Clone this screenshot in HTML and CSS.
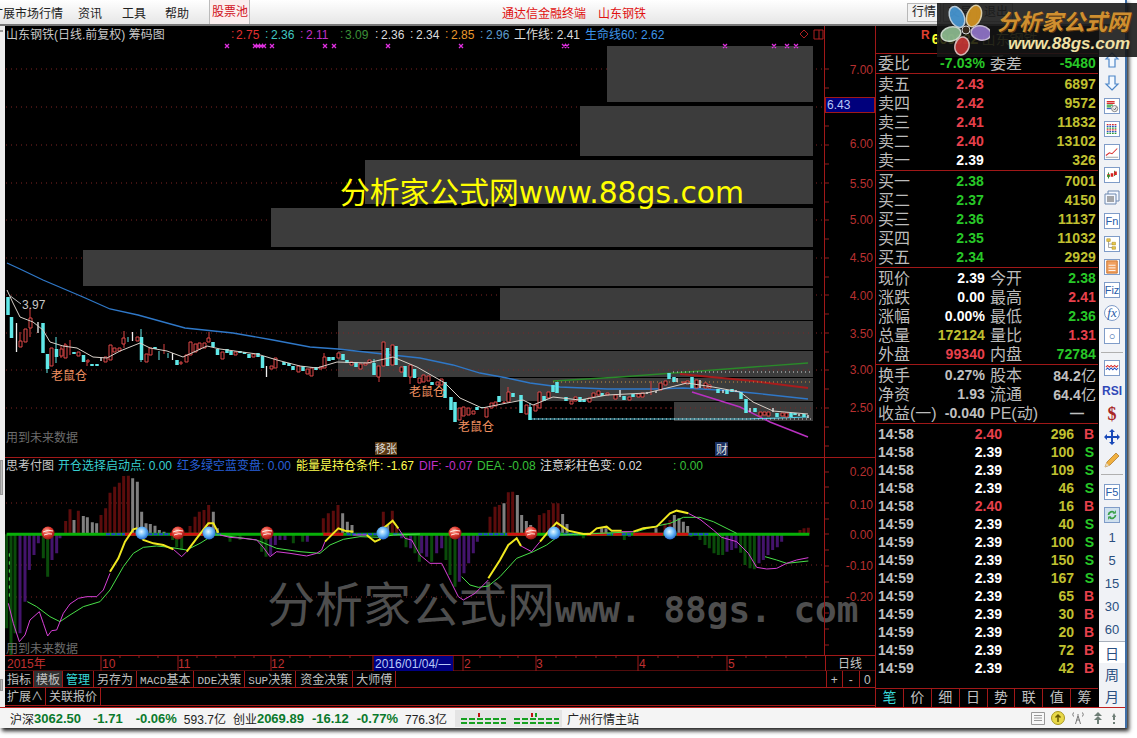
FILE: index.html
```html
<!DOCTYPE html>
<html lang="zh">
<head>
<meta charset="utf-8">
<title>山东钢铁 筹码图</title>
<link rel="stylesheet" href="styles.css">
</head>
<body>
<div class="window">
  <header class="menubar">
    <span class="menu-first">扩展市场行情</span>
    <span class="menu-item m1">资讯</span>
    <span class="menu-item m2">工具</span>
    <span class="menu-item m3">帮助</span>
    <span class="menu-pool">股票池</span>
    <span class="menu-red r1">通达信金融终端</span>
    <span class="menu-red r2">山东钢铁</span>
    <span class="menu-btn">行情</span>
    <span class="menu-btn faded">交易</span>
    <span class="menu-btn faded">退出</span>
  </header>

  <div class="main">
    <div class="edge">
      <span class="edge-mark top"></span>
      <span class="edge-mark mid"></span>
      <span class="edge-mark low"></span>
    </div>

    <section class="charts">
      <svg class="chart" width="870" height="645" viewBox="5 26 870 645" xmlns="http://www.w3.org/2000/svg">
        <defs>
          <radialGradient id="ballRed" cx="40%" cy="35%" r="70%">
            <stop offset="0" stop-color="#ffb0a0"/><stop offset=".5" stop-color="#e03a30"/><stop offset="1" stop-color="#8a1010"/>
          </radialGradient>
          <radialGradient id="ballBlue" cx="45%" cy="40%" r="65%">
            <stop offset="0" stop-color="#e8f8ff"/><stop offset=".5" stop-color="#68b8f8"/><stop offset="1" stop-color="#1c5cc8"/>
          </radialGradient>
        </defs>

        <!-- price grid -->
        <path class="grid" d="M6 69H824M6 107H824M6 145H824M6 183H824M6 220H824M6 258H824M6 295H824M6 333H824M6 370H824M6 408H824"/>

        <!-- chip distribution blocks -->
        <rect class="chip" x="607" y="46" width="206" height="56"/>
        <rect class="chip" x="580" y="106" width="233" height="50"/>
        <rect class="chip" x="365" y="160" width="448" height="44"/>
        <rect class="chip" x="271" y="208" width="542" height="39"/>
        <rect class="chip" x="83" y="250" width="730" height="36"/>
        <rect class="chip" x="500" y="288" width="313" height="32"/>
        <rect class="chip" x="338" y="321" width="475" height="29"/>
        <rect class="chip" x="338" y="351" width="475" height="26"/>
        <rect class="chip" x="500" y="378" width="313" height="23"/>
        <rect class="chip" x="674" y="402" width="139" height="19"/>
        <path class="grid" d="M338 333H813M338 370H813M500 408H813"/>

        <!-- captions -->
        <text class="t12 c-grey" x="6" y="39">山东钢铁(日线.前复权) 筹码图</text>
        <text class="t12 c-red2" x="231" y="38">:</text><text class="t12 c-red2" x="236" y="39">2.75</text>
        <text class="t12 c-tea" x="265" y="38">:</text><text class="t12 c-tea" x="271" y="39">2.36</text>
        <text class="t12 c-mag" x="300" y="38">:</text><text class="t12 c-mag" x="306" y="39">2.11</text>
        <text class="t12 c-grn" x="340" y="38">:</text><text class="t12 c-grn" x="345" y="39">3.09</text>
        <text class="t12 c-wht" x="375" y="38">:</text><text class="t12 c-wht" x="381" y="39">2.36</text>
        <text class="t12 c-wht" x="410" y="38">:</text><text class="t12 c-wht" x="416" y="39">2.34</text>
        <text class="t12 c-org" x="445" y="38">:</text><text class="t12 c-org" x="451" y="39">2.85</text>
        <text class="t12 c-sky" x="480" y="38">:</text><text class="t12 c-sky" x="486" y="39">2.96</text>
        <text class="t12 c-wht" x="514" y="39">工作线: 2.41</text>
        <text class="t12 c-blue" x="585" y="39">生命线60: 2.62</text>
        <path class="mini" d="M800 34l4-4 4 4-4 4zM814 30h9v9h-9zM819 30v9"/>

        <!-- markers -->
        <path class="xmark" d="M225 44l4 4m0-4l-4 4M253 44l4 4m0-4l-4 4M256 44l4 4m0-4l-4 4M259 44l4 4m0-4l-4 4M262 44l4 4m0-4l-4 4M270 44l4 4m0-4l-4 4M323 44l4 4m0-4l-4 4M332 44l4 4m0-4l-4 4M386 44l4 4m0-4l-4 4M459 44l4 4m0-4l-4 4M562 44l4 4m0-4l-4 4M565 44l4 4m0-4l-4 4M723 44l4 4m0-4l-4 4M772 44l4 4m0-4l-4 4M785 44l4 4m0-4l-4 4M794 44l4 4m0-4l-4 4"/>

        <text class="mark-big" x="340" y="203">分析家公式网www.88gs.com</text>

        <!-- moving averages -->
        <polyline class="ln-blue" points="7,263 20,269 43,280 83,297 110,309 138,315 185,328 233,333 273,340 310,347 338,349 383,354 420,358 453,365 480,373 507,378 530,383 560,387 607,389 653,389 683,388 720,390 753,393 808,399"/>
        <polyline class="ln-green" points="553,381 620,377 687,372 753,367 808,363"/>
        <polyline class="ln-red" points="680,374 753,381 808,388"/>
        <polyline class="ln-mag" points="692,392 740,407 770,422 808,437"/>
        <polyline class="ln-cyan" points="530,403 530,419 600,419 748,419 808,417"/>
        <path class="dots-w" d="M673 372H813M530 419H813"/>
        <path class="dots-o" d="M553 382H813"/>

        <!-- candles -->
        <path class="wick-red" d="M20 332V347M30 308V337M61 346V358M65 343V358M70 340V355M87 360V366M124 331V348M164 344V354M209 332V342M324 353V368M379 366V382M410 365V384M508 387V402M651 381V395"/>
        <path class="wick-cyan" d="M56 337V363M141 329V362M374 359V375M47 354V373M159 351V360M168 353V358M128 337V342"/>
        <path class="body-cyan" d="M8 297V315M11.500 317V338M43 323V353M47.500 354V369M56.500 349V357M74 352V354M83.500 355V362M92 364V366M97 364V366M141.500 337V360M155 347V349M177 360V365M213 342V347M217.500 349V355M227 349V353M231 351V355M240 351V353M244.500 352V354M249 354V358M258 353V357M262.500 356V368M284 362V365M289 363V366M293 366V370M303 366V371M316 367V370M329 357V361M333 357V360M343 354V360M347 360V363M356 362V367M374 363V375M387.500 348V366M396 346V365M405 366V377M414.500 369V378M432 382V385M445 382V398M451 397V410M455 402V422M477 407V410M482 407V408M499 396V402M513 393V397M521 395V413M530 407V420M544 396V401M553 385V392M557 382V393M566 397V401M580 397V402M584 399V402M602 393V396M624 396V400M633 394V397M669 373V379M674 377V382M692 377V388M718 389V393M727 390V394M732 389V392M741 392V399M746 399V413M755 408V412M777 413V417M791 413V417M795 413V415M804 414V417"/>
        <path class="wick-white" d="M16.500 323V352M38 322V333M101 357V361M132.500 332V341M172.500 353V360M266.500 366V377M620 390V397M647 392V394M656 391V393M677 378V382M700 380V388M723 390V393M736 390V392M750 408V412M773 408V412M799 414V416M808 415V418"/>
        <path class="body-red" d="M19 341h3v6h-3zM24 329h3v13h-3zM29 318h3v10h-3zM50 348h3v18h-3zM60 349h3v7h-3zM64 345h3v13h-3zM77 352h3v4h-3zM87 360h2v2h-2zM104 357h3v5h-3zM109 345h3v15h-3zM113 348h3v4h-3zM118 348h3v3h-3zM122 338h3v6h-3zM136 337h3v4h-3zM145 354h3v8h-3zM149 348h3v7h-3zM180 362h2v2h-2zM185 355h3v7h-3zM189 342h3v13h-3zM194 344h3v8h-3zM198 343h3v6h-3zM203 343h3v5h-3zM207 338h3v4h-3zM221 352h3v7h-3zM234 352h3v3h-3zM252 354h3v3h-3zM270 366h3v3h-3zM274 358h3v10h-3zM297 366h3v6h-3zM306 369h3v5h-3zM310 368h3v8h-3zM319 367h3v2h-3zM323 357h3v11h-3zM337 353h3v5h-3zM350 362h3v3h-3zM359 364h3v5h-3zM364 363h3v2h-3zM368 360h3v3h-3zM377 366h3v11h-3zM382 342h3v24h-3zM391 345h3v20h-3zM400 367h3v5h-3zM409 365h3v12h-3zM418 378h3v5h-3zM422 375h3v7h-3zM427 376h3v5h-3zM436 382h3v3h-3zM440 379h3v6h-3zM458 408h3v12h-3zM462 407h3v9h-3zM467 408h3v7h-3zM472 411h3v3h-3zM485 408h3v9h-3zM490 403h3v5h-3zM494 402h3v4h-3zM503 402h2v1h-2zM507 392h3v10h-3zM525 405h3v9h-3zM534 405h3v6h-3zM538 392h3v16h-3zM547 392h3v6h-3zM570 401h3v3h-3zM574 397h3v4h-3zM588 398h3v4h-3zM592 393h3v4h-3zM597 391h3v4h-3zM606 393h3v2h-3zM614 395h3v4h-3zM628 397h3v3h-3zM637 394h3v3h-3zM641 393h3v4h-3zM659 383h3v7h-3zM664 381h3v4h-3zM682 382h3v1h-3zM686 381h3v3h-3zM695 380h3v8h-3zM704 383h3v5h-3zM708 385h3v3h-3zM759 412h3v4h-3zM763 412h3v3h-3zM767 412h3v4h-3zM781 413h3v3h-3zM785 413h3v4h-3z"/>
        <polyline class="ln-white" points="7,290 13,303 20,317 33,322 43,330 50,342 63,346 77,348 93,357 107,358 120,351 140,343 150,348 167,351 183,357 207,346 220,349 257,354 277,360 300,366 317,368 337,362 367,363 393,357 417,367 445,383 460,398 482,408 507,403 523,400 533,405 553,397 580,400 607,395 647,393 667,388 687,383 713,387 740,392 753,402 773,411 808,414"/>

        <path class="ln-thin" d="M9 295L21 304"/>
        <text class="t12 c-grey" x="22" y="309">3.97</text>
        <text class="t12 c-rat" x="51" y="380">老鼠仓</text>
        <text class="t12 c-rat" x="409" y="396">老鼠仓</text>
        <text class="t12 c-rat" x="458" y="431">老鼠仓</text>
        <text class="t12 c-dim" x="6" y="442">用到未来数据</text>
        <rect class="tag-brown" x="375" y="442" width="22" height="13"/>
        <text class="t11 c-wht" x="375" y="453">移张</text>
        <rect class="tag-blue" x="715" y="442" width="13" height="14"/>
        <text class="t12 c-wht" x="716" y="454">财</text>

        <!-- sub chart -->
        <path class="rule" d="M5 457.500H875"/>
        <path class="grid" d="M6 503H824M6 565H824M6 597H824"/>
        <text class="t12 c-grey" x="6" y="470">思考付图</text>
        <text class="t12 c-tea2" x="58" y="470">开仓选择启动点: 0.00</text>
        <text class="t12 c-blu2" x="177" y="470">红多绿空蓝变盘: 0.00</text>
        <text class="t12 c-yel" x="296" y="470">能量是持仓条件: -1.67</text>
        <text class="t12 c-mag" x="419" y="470">DIF: -0.07</text>
        <text class="t12 c-grn2" x="477" y="470">DEA: -0.08</text>
        <text class="t12 c-wht" x="540" y="470">注意彩柱色变: 0.02</text>
        <text class="t12 c-grn2" x="673" y="470">: 0.00</text>

        <text class="mark-dim" x="267" y="622">分析家公式网<tspan class="mark-dim-mono">www. 88gs. com</tspan></text>

        <g transform="translate(0,460) scale(.33333)">
          <path class="h-red" d="M197 223V183M210 223V148M235 223V152M303 223V165M317 223V145M330 223V98M344 223V80M358 223V68M371 223V48M385 223V47M570 223V198M585 223V170M598 223V155M612 223V150M626 223V135M970 223V175M985 223V160M1000 223V152M1014 223V135M1150 223V155M1177 223V152M1190 223V200"/>
          <path class="h-grey" d="M222 223V180M250 223V168M262 223V172M277 223V187M290 223V190M398 223V55M412 223V65M425 223V155M438 223V190M451 223V192M465 223V197M478 223V210M492 223V215M640 223V155M652 223V205M1028 223V160M1042 223V185M1056 223V195M1163 223V195"/>
          <path class="h-green" d="M20 223V505M33 223V585M45 223V520M130 223V295M143 223V350M518 223V240M530 223V262M545 223V270M690 223V245M720 223V240M785 223V275M798 223V290M880 223V250M908 223V245M1218 223V262M1245 223V280M1258 223V305"/>
          <path class="h-purple" d="M60 223V520M75 223V425M88 223V330M102 223V285M115 223V250M156 223V300M170 223V280M180 223V235M812 223V285M826 223V255M840 223V240M855 223V240M922 223V245M1205 223V235M1232 223V265"/>
          <path class="zero-green" d="M20 223H1260"/>
          <path class="zero-blue" d="M318 223H375M445 223H510M650 223H665M1040 223H1130M1180 223H1205"/>
          <path class="zero-red" d="M375 223H410M510 223H640M970 223H1030"/>
          <polyline class="ln-dea" points="82,425 110,440 150,470 180,485 210,465 250,440 300,425 330,390 370,320 400,280 430,262 470,258 510,262 560,270 600,250 640,225 660,225 770,240 830,265 900,275 960,280 990,255 1030,238 1080,230 1140,232 1180,225 1260,222"/>
          <polyline class="ln-dif" points="25,430 40,490 58,545 75,525 90,480 118,455 130,490 143,528 155,512 170,510 190,460 210,432 235,415 260,410 290,410 310,390 330,340"/>
          <polyline class="ln-dif" points="520,268 545,290 560,275"/>
          <polyline class="ln-dif" points="660,225 690,232 730,235 770,240 790,262 810,290 830,275 870,280 920,288 950,280 965,270 975,245"/>
          <polyline class="ln-dif" points="1060,225 1100,225"/>
          <polyline class="ln-dif" points="1195,205 1215,235 1235,240 1260,285"/>
          <polyline class="ln-yel" points="330,335 355,295 375,245 400,208 410,205 430,240 460,250 490,255 520,268"/>
          <polyline class="ln-yel" points="560,275 590,235 625,190 640,190 655,218"/>
          <polyline class="ln-yel" points="975,245 1015,205 1035,212 1060,215"/>
          <polyline class="ln-yel" points="1100,225 1125,245 1140,238 1150,205 1178,182 1195,205"/>
          <path class="dots-lg" d="M28 280V410"/>
        </g>
        <g transform="translate(420,460) scale(.33333)">
          <path class="h-red" d="M210 223V170M225 223V140M238 223V135M265 223V97M278 223V95M358 223V165M372 223V160M386 223V150M400 223V130M414 223V130M735 223V190M750 223V180M1140 223V210M1152 223V205M1165 223V203"/>
          <path class="h-grey" d="M252 223V130M292 223V105M305 223V165M319 223V183M332 223V195M428 223V162M441 223V192M545 223V205M558 223V205M708 223V205M763 223V165M777 223V175M790 223V185M803 223V198"/>
          <path class="h-green" d="M35 223V305M78 223V300M90 223V345M105 223V380M490 223V235M613 223V240M813 223V230M840 223V240M855 223V255M868 223V265M882 223V280M895 223V285M908 223V285M962 223V278M975 223V315M990 223V325M1003 223V328"/>
          <path class="h-purple" d="M5 223V280M20 223V290M50 223V280M65 223V265M118 223V365M132 223V340M146 223V310M160 223V280M172 223V245M628 223V230M921 223V275M935 223V270M948 223V265M1017 223V310M1030 223V300M1044 223V285M1058 223V270M1072 223V262M1085 223V245"/>
          <path class="zero-green" d="M0 223H1168"/>
          <path class="zero-blue" d="M175 223H262M430 223H480M560 223H580M605 223H635M805 223H865"/>
          <path class="zero-red" d="M262 223H345M500 223H560M580 223H605M640 223H730M770 223H805"/>
          <polyline class="ln-dea" points="125,350 150,375 175,382 205,378 240,350 290,295 340,275 380,255 420,225 500,222 650,215 700,200 750,190 790,172 840,172 880,185 950,220"/>
          <polyline class="ln-dea" points="1035,290 1070,300 1100,310 1165,303"/>
          <polyline class="ln-dif" points="0,285 30,310 65,310 95,370 115,410 130,420 165,400 205,360"/>
          <polyline class="ln-dif" points="303,258 335,275 360,245"/>
          <polyline class="ln-dif" points="605,215 640,215"/>
          <polyline class="ln-dif" points="805,160 840,178 880,210 905,232 950,245 985,280 1010,322 1040,327 1070,325 1100,310 1130,300 1165,293"/>
          <polyline class="ln-yel" points="205,355 240,300 265,255 290,235 303,258"/>
          <polyline class="ln-yel" points="360,245 385,215 410,188 445,212 490,222 510,222 530,205 560,200 575,212 605,212"/>
          <polyline class="ln-yel" points="640,215 670,205 710,200 750,160 770,152 805,160"/>
        </g>

        <circle class="ball-r" cx="48" cy="533" r="6.500"/><path class="ball-streak" d="M43 532q5-3 10-1M44 535q5-2 8-1"/>
        <circle class="ball-r" cx="178" cy="533" r="6.500"/><path class="ball-streak" d="M173 532q5-3 10-1M174 535q5-2 8-1"/>
        <circle class="ball-r" cx="267" cy="533" r="6.500"/><path class="ball-streak" d="M262 532q5-3 10-1M263 535q5-2 8-1"/>
        <circle class="ball-r" cx="455" cy="533" r="6.500"/><path class="ball-streak" d="M450 532q5-3 10-1M451 535q5-2 8-1"/>
        <circle class="ball-r" cx="531" cy="533" r="6.500"/><path class="ball-streak" d="M526 532q5-3 10-1M527 535q5-2 8-1"/>
        <circle class="ball-b" cx="142" cy="533" r="6.500"/>
        <circle class="ball-b" cx="209" cy="533" r="6.500"/>
        <circle class="ball-b" cx="383" cy="533" r="6.500"/>
        <circle class="ball-b" cx="554" cy="533" r="6.500"/>
        <circle class="ball-b" cx="670" cy="533" r="6.500"/>

        <text class="t12 c-dim" x="6" y="653">用到未来数据</text>

        <!-- axes -->
        <path class="rule" d="M824.500 26V655M5 655.500H875M5 671H875M825.500 655V671"/>
        <path class="tick" d="M824 69h5M824 88h5M824 107h5M824 126h5M824 145h5M824 164h5M824 183h5M824 202h5M824 220h5M824 239h5M824 258h5M824 277h5M824 295h5M824 314h5M824 333h5M824 352h5M824 370h5M824 389h5M824 408h5M824 427h5M824 446h5M824 472h5M824 487h5M824 503h5M824 519h5M824 534h5M824 550h5M824 566h5M824 582h5M824 597h5M824 613h5M824 629h5M824 645h5"/>
        <text class="axis" x="873" y="74">7.00</text>
        <text class="axis" x="873" y="148">6.00</text>
        <text class="axis" x="873" y="188">5.50</text>
        <text class="axis" x="873" y="224">5.00</text>
        <text class="axis" x="873" y="262">4.50</text>
        <text class="axis" x="873" y="300">4.00</text>
        <text class="axis" x="873" y="338">3.50</text>
        <text class="axis" x="873" y="374">3.00</text>
        <text class="axis" x="873" y="412">2.50</text>
        <rect class="price-tag" x="825.500" y="97.500" width="49" height="15"/>
        <text class="t12 c-tag" x="827" y="109">6.43</text>
        <text class="axis" x="873" y="476">0.20</text>
        <text class="axis" x="873" y="509">0.10</text>
        <text class="axis" x="873" y="539">0.00</text>
        <text class="axis" x="873" y="570">-0.10</text>
        <text class="axis" x="873" y="601">-0.20</text>

        <!-- date axis -->
        <path class="rule" d="M101 655V671M178 655V671M271 655V671M373 655V671M453 655V671M463 655V671M536 655V671M638 655V671M727 655V671"/>
        <path class="tick" d="M120 655v3M139 655v3M158 655v3M197 655v3M216 655v3M235 655v3M254 655v3M290 655v3M310 655v3M330 655v3M350 655v3M480 655v3M500 655v3M518 655v3M556 655v3M576 655v3M596 655v3M616 655v3M658 655v3M678 655v3M698 655v3M712 655v3M746 655v3M766 655v3M786 655v3M806 655v3"/>
        <text class="date" x="7" y="668">2015年</text>
        <text class="date" x="102" y="668">10</text>
        <text class="date" x="178" y="668">11</text>
        <text class="date" x="271" y="668">12</text>
        <rect class="date-box" x="374" y="656" width="79" height="15"/>
        <text class="t12 c-tag" x="375" y="668">2016/01/04/—</text>
        <text class="date" x="464" y="668">2</text>
        <text class="date" x="536" y="668">3</text>
        <text class="date" x="639" y="668">4</text>
        <text class="date" x="728" y="668">5</text>
        <text class="t12 c-grey" x="838" y="668">日线</text>
      </svg>

      <nav class="tabs tabs-a">
        <span class="tab tight">指标</span>
        <span class="tab tight on">模板</span>
        <span class="tab cyan">管理</span>
        <span class="tab">另存为</span>
        <span class="tab"><span class="mono">MACD</span>基本</span>
        <span class="tab"><span class="mono">DDE</span>决策</span>
        <span class="tab"><span class="mono">SUP</span>决策</span>
        <span class="tab wide">资金决策</span>
        <span class="tab">大师傅</span>
        <span class="zoomer"><span>+</span><span>-</span><span>0</span></span>
      </nav>
      <nav class="tabs tabs-b">
        <span class="tab tight">扩展∧</span>
        <span class="tab">关联报价</span>
      </nav>
    </section>

    <aside class="quote">
      <div class="q-head"><b class="q-r">R</b><b class="q-code">600022</b><span class="q-name">山东钢铁</span></div>
      <div class="q-block one">
        <div class="row four"><span class="lb">委比</span><b class="grn">-7.03%</b><span class="lb lb2">委差</span><b class="grn">-5480</b></div>
      </div>
      <div class="q-block">
        <div class="row book"><span class="lb">卖五</span><b class="red">2.43</b><b class="yel">6897</b></div>
        <div class="row book"><span class="lb">卖四</span><b class="red">2.42</b><b class="yel">9572</b></div>
        <div class="row book"><span class="lb">卖三</span><b class="red">2.41</b><b class="yel">11832</b></div>
        <div class="row book"><span class="lb">卖二</span><b class="red">2.40</b><b class="yel">13102</b></div>
        <div class="row book"><span class="lb">卖一</span><b class="wht">2.39</b><b class="yel">326</b></div>
      </div>
      <div class="q-block">
        <div class="row book"><span class="lb">买一</span><b class="grn">2.38</b><b class="yel">7001</b></div>
        <div class="row book"><span class="lb">买二</span><b class="grn">2.37</b><b class="yel">4150</b></div>
        <div class="row book"><span class="lb">买三</span><b class="grn">2.36</b><b class="yel">11137</b></div>
        <div class="row book"><span class="lb">买四</span><b class="grn">2.35</b><b class="yel">11032</b></div>
        <div class="row book"><span class="lb">买五</span><b class="grn">2.34</b><b class="yel">2929</b></div>
      </div>
      <div class="q-block">
        <div class="row four"><span class="lb">现价</span><b class="wht">2.39</b><span class="lb lb2">今开</span><b class="grn">2.38</b></div>
        <div class="row four"><span class="lb">涨跌</span><b class="wht">0.00</b><span class="lb lb2">最高</span><b class="red">2.41</b></div>
        <div class="row four"><span class="lb">涨幅</span><b class="wht">0.00%</b><span class="lb lb2">最低</span><b class="grn">2.36</b></div>
        <div class="row four"><span class="lb">总量</span><b class="yel">172124</b><span class="lb lb2">量比</span><b class="red">1.31</b></div>
        <div class="row four"><span class="lb">外盘</span><b class="red">99340</b><span class="lb lb2">内盘</span><b class="grn">72784</b></div>
      </div>
      <div class="q-block">
        <div class="row four"><span class="lb">换手</span><b class="gry">0.27%</b><span class="lb lb2">股本</span><b class="gry">84.2<span class="yi">亿</span></b></div>
        <div class="row four"><span class="lb">净资</span><b class="gry">1.93</b><span class="lb lb2">流通</span><b class="gry">64.4<span class="yi">亿</span></b></div>
        <div class="row four"><span class="lb lb-wide">收益(一)</span><b class="gry">-0.040</b><span class="lb lb2 lb-wide">PE(动)</span><b class="gry dash">—</b></div>
      </div>
      <div class="ticks">
        <div class="tick-row"><b class="gry">14:58</b><b class="red">2.40</b><b class="yel">296</b><b class="red">B</b></div>
        <div class="tick-row"><b class="gry">14:58</b><b class="wht">2.39</b><b class="yel">100</b><b class="grn">S</b></div>
        <div class="tick-row"><b class="gry">14:58</b><b class="wht">2.39</b><b class="yel">109</b><b class="grn">S</b></div>
        <div class="tick-row"><b class="gry">14:58</b><b class="wht">2.39</b><b class="yel">46</b><b class="grn">S</b></div>
        <div class="tick-row"><b class="gry">14:58</b><b class="red">2.40</b><b class="yel">16</b><b class="red">B</b></div>
        <div class="tick-row"><b class="gry">14:59</b><b class="wht">2.39</b><b class="yel">40</b><b class="grn">S</b></div>
        <div class="tick-row"><b class="gry">14:59</b><b class="wht">2.39</b><b class="yel">100</b><b class="grn">S</b></div>
        <div class="tick-row"><b class="gry">14:59</b><b class="wht">2.39</b><b class="yel">150</b><b class="grn">S</b></div>
        <div class="tick-row"><b class="gry">14:59</b><b class="wht">2.39</b><b class="yel">167</b><b class="grn">S</b></div>
        <div class="tick-row"><b class="gry">14:59</b><b class="wht">2.39</b><b class="yel">65</b><b class="red">B</b></div>
        <div class="tick-row"><b class="gry">14:59</b><b class="wht">2.39</b><b class="yel">30</b><b class="red">B</b></div>
        <div class="tick-row"><b class="gry">14:59</b><b class="wht">2.39</b><b class="yel">20</b><b class="red">B</b></div>
        <div class="tick-row"><b class="gry">14:59</b><b class="wht">2.39</b><b class="yel">72</b><b class="red">B</b></div>
        <div class="tick-row"><b class="gry">14:59</b><b class="wht">2.39</b><b class="yel">42</b><b class="red">B</b></div>
      </div>
      <div class="q-tabs"><span class="cyan">笔</span><span>价</span><span>细</span><span>日</span><span>势</span><span>联</span><span>值</span><span>筹</span></div>
    </aside>

    <div class="toolbar">
      <span class="tool"><svg class="ico" viewBox="0 0 16 16"><path class="arrow" d="M8 1L14 7H11V15H5V7H2Z"/></svg></span>
      <span class="tool"><svg class="ico" viewBox="0 0 16 16"><path class="arrow" d="M8 15L14 9H11V1H5V9H2Z"/></svg></span>
      <span class="tool"><svg class="ico box" viewBox="0 0 16 16"><path class="i-red" d="M2 3h9M2 5h9"/><path class="i-grn" d="M2 7h7M2 9h5"/><path class="i-blu" d="M2 11h5"/><circle class="i-ring" cx="11" cy="11" r="3.500"/><path class="i-chk" d="M9.500 11l1.500 1.500 2-3"/></svg></span>
      <span class="tool"><svg class="ico box" viewBox="0 0 16 16"><path class="i-red dash3" d="M2 3h12M2 9h12"/><path class="i-blu dash3" d="M2 5h12M2 11h12"/><path class="i-grn dash3" d="M2 7h12M2 13h12"/></svg></span>
      <span class="tool"><svg class="ico box" viewBox="0 0 16 16"><path class="i-red" d="M1 12L5 9L8 10L14 4"/><path class="i-faint" d="M1 14H15"/></svg></span>
      <span class="tool"><svg class="ico box" viewBox="0 0 16 16"><path class="i-grn" d="M4 5v7M11 3v6"/><path class="i-thick-r" d="M4 7v3M8 6v4M12 4v4"/><path class="i-thick-g" d="M4 8v2"/></svg></span>
      <span class="tool"><svg class="ico" viewBox="0 0 16 16"><path class="i-sheet" d="M4 1h11v10H4z"/><path class="i-sheet" d="M1 4h11v10H1z"/><path class="i-dark" d="M3 7h7M3 9h7M3 11h7"/></svg></span>
      <span class="tool"><span class="tbox">Fn</span></span>
      <span class="tool"><svg class="ico box" viewBox="0 0 16 16"><path class="i-faint" d="M4 4v8h4M4 8h4"/><path class="i-yel" d="M2 2h4v3H2zM8 6h4v3H8zM8 11h4v3H8z"/></svg></span>
      <span class="tool"><svg class="ico box" viewBox="0 0 16 16"><path class="i-org" d="M2 1h12v14H2z"/><path class="i-wl" d="M4 6h8M4 9h8M4 12h8"/></svg></span>
      <span class="tool"><span class="tbox">Fiz</span></span>
      <span class="tool"><span class="tbox fx">fx</span></span>
      <span class="tool"><span class="tbox">○</span></span>
      <i class="tsep a"></i>
      <span class="tool"><svg class="ico box" viewBox="0 0 16 16"><path class="i-red" d="M1 7l2-2 2 2 2-2 2 2 2-2 2 2 2-2"/><path class="i-blu" d="M1 10l2-2 2 2 2-2 2 2 2-2 2 2 2-2"/></svg></span>
      <span class="tool rsi">RSI</span>
      <span class="tool dollar">$</span>
      <span class="tool"><svg class="ico" viewBox="0 0 16 16"><path class="i-move" d="M8 0L11 3H9V7H13V5L16 8L13 11V9H9V13H11L8 16L5 13H7V9H3V11L0 8L3 5V7H7V3H5Z"/></svg></span>
      <span class="tool"><svg class="ico" viewBox="0 0 16 16"><path class="i-pencil" d="M12 1l3 3-9 9-5 2 2-5z"/><path class="i-tip" d="M1 15l1.500-4 2.500 2.500z"/></svg></span>
      <i class="tsep b"></i>
      <span class="tool"><span class="tbox">F5</span></span>
      <span class="tool"><svg class="ico box tinted" viewBox="0 0 16 16"><path class="i-refresh" d="M4 8a4 4 0 0 1 7-2.500M12 8a4 4 0 0 1-7 2.500"/><path class="i-refresh-h" d="M12 3v3H9M4 13v-3h3"/></svg></span>
      <span class="tool num">1</span>
      <span class="tool num">5</span>
      <span class="tool num">15</span>
      <span class="tool num">30</span>
      <span class="tool num">60</span>
      <span class="tool per first on">日</span>
      <span class="tool per">周</span>
      <span class="tool per">月</span>
    </div>
  </div>

  <footer class="status">
    <span class="s-item"><span class="s-cn">沪深</span><b class="s-g">3062.50</b></span>
    <b class="s-g gap12">-1.71</b>
    <b class="s-g gap13">-0.06%</b>
    <span class="s-amt">593.7亿</span>
    <span class="s-item"><span class="s-cn">创业</span><b class="s-g">2069.89</b></span>
    <b class="s-g gap8">-16.12</b>
    <b class="s-g gap8">-0.77%</b>
    <span class="s-amt">776.3亿</span>
    <svg class="meter" width="107" height="17" viewBox="0 0 107 17">
      <rect class="m-bg" x="0" y="0" width="107" height="17"/>
      <path class="m-g" d="M6 9h45M6 13h45M59 9h45M59 13h45"/>
      <path class="m-r" d="M24 3v4M77 3v4"/>
      <path class="m-gv" d="M81 3v4"/>
    </svg>
    <span class="s-site">广州行情主站</span>
    <span class="s-icons">
      <svg class="s-ico" viewBox="0 0 14 14"><path class="si-doc" d="M.500 1.500h13v12H.500zM3 4.500h8M3 7h8M3 9.500h8"/></svg>
      <svg class="s-ico" viewBox="0 0 14 14"><circle class="si-coin" cx="7" cy="7" r="6.500"/><path class="si-up" d="M7 11V4M4.500 6.500L7 4l2.500 2.500"/></svg>
      <svg class="s-ico" viewBox="0 0 14 14"><path class="si-ant" d="M7 3v1M4.500 13L7 4.500 9.500 13M5.500 9h3M2.500 1.500q-1.500 2 0 4M11.500 1.500q1.500 2 0 4"/></svg>
      <svg class="s-ico" viewBox="0 0 14 14"><path class="si-tree" d="M7 1L11 5H3ZM7 5L11 9H3ZM6 9h2v4H6z"/></svg>
      <svg class="s-ico narrow" viewBox="0 0 6 14"><path class="si-tree" d="M3 2L5 6H4V9H2V6H1ZM2 11h2v2H2z"/></svg>
    </span>
  </footer>

  <div class="logo">
    <svg class="flower" width="50" height="52" viewBox="0 0 50 52">
      <g transform="translate(26,26)">
        <ellipse class="pt-blue" cx="-9" cy="-13" rx="7" ry="11" transform="rotate(-25 -9 -13)"/>
        <ellipse class="pt-org" cx="8" cy="-14" rx="7" ry="11" transform="rotate(20 8 -14)"/>
        <ellipse class="pt-pur" cx="15" cy="3" rx="10" ry="7" transform="rotate(10 15 3)"/>
        <ellipse class="pt-red" cx="-4" cy="16" rx="7" ry="9" transform="rotate(15 -4 16)"/>
        <ellipse class="pt-grn" cx="-15" cy="4" rx="10" ry="7" transform="rotate(-15 -15 4)"/>
        <circle class="pt-mid" cx="0" cy="0" r="4"/>
      </g>
    </svg>
    <div class="logo-text">
      <span class="logo-cn">分析家公式网</span>
      <span class="logo-en">www.88gs.com</span>
    </div>
  </div>
</div>
</body>
</html>
```

FILE: styles.css
```css
* { box-sizing: border-box; }
html, body { margin: 0; padding: 0; }
body {
  width: 1137px; height: 738px; overflow: hidden; background: #fff;
  font-family: "Liberation Sans", "Noto Sans CJK SC", sans-serif;
  font-size: 12px;
}
.window {
  position: relative; width: 1127px; height: 728px; background: #f4f4f4;
  box-shadow: 2px 3px 4px #222;
  border-right: 2px solid #3f6fa8;
}

/* menu bar */
.menubar {
  display: flex; align-items: center; height: 26px; overflow: hidden;
  background: linear-gradient(#fff, #e6e6e6);
  border-bottom: 2px solid #777;
  font-size: 12px; color: #222; white-space: nowrap;
}
.menu-first { margin-left: -9px; width: 87px; }
.menu-item { width: 43.500px; }
.menu-item.m1 { width: 44px; } .menu-item.m2 { width: 43px; } .menu-item.m3 { width: 44px; }
.menu-pool {
  height: 24px; line-height: 24px; padding: 0 2px; width: 41px;
  color: #d01020; background: #fbeeee;
  border-left: 1px solid #bbb; border-right: 1px solid #bbb;
}
.menu-red { color: #e01010; }
.r1 { margin-left: 252px; }
.r2 { margin-left: 12px; }
.menu-btn {
  padding: 1px 4px; margin-right: 2px; height: 19px; line-height: 15px;
  border: 1px solid #b8b8b8; background: #f2f2f2;
}
.menu-btn:nth-of-type(8) { margin-left: 261px; }
.menu-btn.faded { color: #555; }

.main { display: flex; height: 681px; background: #000; }
.edge { position: relative; width: 5px; background: #eee; }
.edge-mark { position: absolute; left: 0; width: 3px; background: #bbb; border: 1px solid #999; }
.edge-mark.top { top: 4px; height: 2px; }
.edge-mark.mid { top: 434px; height: 35px; }
.edge-mark.low { top: 653px; height: 12px; }

/* charts */
.charts { width: 870px; display: flex; flex-direction: column; background: #000; }
.chart { display: block; font-family: "Liberation Sans", "Noto Sans CJK SC", sans-serif; }
.t12 { font-size: 12px; }
.t11 { font-size: 11px; }
.c-grey { fill: #c8c8c8; }
.c-dim { fill: #6c6c6c; }
.c-wht { fill: #dcdcdc; }
.c-red2 { fill: #e03030; }
.c-tea { fill: #40c8c0; }
.c-tea2 { fill: #38d0d0; }
.c-mag { fill: #c030c8; }
.c-grn { fill: #3c9038; }
.c-grn2 { fill: #38c038; }
.c-org { fill: #e8982c; }
.c-sky { fill: #5c9ccc; }
.c-blue { fill: #3c94e8; }
.c-blu2 { fill: #2860d8; }
.c-yel { fill: #ffff50; }
.c-rat { fill: #f09060; }
.c-tag { fill: #b8c8f8; }
.grid { fill: none; stroke: #802424; stroke-width: 1; stroke-dasharray: 1 4; }
.chip { fill: #3c3c3c; }
.mini { fill: none; stroke: #b02020; stroke-width: 1; }
.xmark { fill: none; stroke: #e030e0; stroke-width: 1.300; }
.mark-big { font-family: "DejaVu Sans", "Noto Sans CJK SC", sans-serif; font-size: 29.800px; fill: #ffff00; }
.mark-dim { font-family: "Noto Sans CJK SC", sans-serif; font-size: 48px; fill: #4e4e4e; }
.mark-dim-mono { font-family: "DejaVu Sans Mono", monospace; font-size: 36px; font-weight: bold; }
.ln-blue { fill: none; stroke: #2f78c8; stroke-width: 1.300; }
.ln-green { fill: none; stroke: #2a8a2a; stroke-width: 1.300; }
.ln-red { fill: none; stroke: #a81c1c; stroke-width: 2; }
.ln-mag { fill: none; stroke: #b830c0; stroke-width: 1.500; }
.ln-cyan { fill: none; stroke: #50c8e0; stroke-width: 1.200; }
.ln-white { fill: none; stroke: #d8d0c8; stroke-width: 1; }
.ln-thin { fill: none; stroke: #bbb; stroke-width: 1; }
.dots-w { fill: none; stroke: #d8d8d8; stroke-width: 1; stroke-dasharray: 1 3; }
.dots-o { fill: none; stroke: #c89040; stroke-width: 1; stroke-dasharray: 1 3; }
.wick-red { fill: none; stroke: #d84040; stroke-width: 1; }
.wick-cyan { fill: none; stroke: #60e8e8; stroke-width: 1; }
.wick-white { fill: none; stroke: #f0f0f0; stroke-width: 1.300; }
.body-cyan { fill: none; stroke: #60e8e8; stroke-width: 3.500; }
.body-red { fill: #000; stroke: #e04848; stroke-width: 1; }
.tag-brown { fill: #5a3a14; }
.tag-blue { fill: #1a3060; }
.rule { fill: none; stroke: #a01818; stroke-width: 1; }
.tick { fill: none; stroke: #901c1c; stroke-width: 1; }
.axis { font-size: 12px; fill: #b83030; text-anchor: end; }
.date { font-size: 12px; fill: #c03030; }
.price-tag { fill: #00007c; stroke: #a01818; }
.date-box { fill: #000084; }
.h-red { fill: none; stroke: #5c0c0c; stroke-width: 9; }
.h-grey { fill: none; stroke: #808080; stroke-width: 9; }
.h-green { fill: none; stroke: #0a4c0a; stroke-width: 9; }
.h-purple { fill: none; stroke: #44146c; stroke-width: 9; }
.zero-green { fill: none; stroke: #08b008; stroke-width: 9; }
.zero-blue { fill: none; stroke: #2040d0; stroke-width: 6; stroke-dasharray: 12 4; }
.zero-red { fill: none; stroke: #d01010; stroke-width: 9; }
.ln-dea { fill: none; stroke: #48e048; stroke-width: 3; }
.ln-dif { fill: none; stroke: #d840d8; stroke-width: 3; }
.ln-yel { fill: none; stroke: #f0e820; stroke-width: 6; }
.dots-lg { fill: none; stroke: #48e048; stroke-width: 3; stroke-dasharray: 10 14; }
.ball-r { fill: url(#ballRed); }
.ball-b { fill: url(#ballBlue); }
.ball-streak { fill: none; stroke: #ffe8e0; stroke-width: 1; }

/* tabs */
.tabs { display: flex; height: 18px; background: #000; border-bottom: 1px solid #a01818; color: #c0c0c0; line-height: 18px; font-size: 12px; }
.tabs-a { height: 17px; }
.tab { padding: 0 3px; border-right: 1px solid #a01818; white-space: nowrap; }
.tab.tight { padding: 0 2px; }
.tab.wide { padding: 0 4px; }
.tab.on { background: #303030; }
.tab.cyan { color: #38d8d8; }
.mono { font-family: "Liberation Mono", monospace; font-size: 11px; }
.zoomer { display: flex; margin-left: auto; height: 16px; }
.zoomer span { width: 16.500px; text-align: center; border-left: 1px solid #a01818; }

/* quote panel */
.quote { width: 224px; display: flex; flex-direction: column; background: #000; border-left: 1px solid #a01818; border-right: 1px solid #000; }
.q-head { height: 28px; padding: 2px 0 0 45px; border-bottom: 1px solid #a01818; line-height: 22px; font-size: 14px; white-space: nowrap; }
.q-r { color: #e04030; font-size: 12px; display: inline-block; vertical-align: top; margin-top: -4px; }
.q-code { color: #ffff30; margin-left: 2px; }
.q-name { color: #a0a040; margin-left: 3px; }
.q-block { display: flex; flex-direction: column; padding: 1px 0 0; border-bottom: 1px solid #a01818; }
.q-block.one { padding: 0; height: 20px; justify-content: center; }
.row { display: grid; height: 19px; line-height: 19px; padding: 0 2px 0 2px; font-size: 14px; white-space: nowrap; }
.book { grid-template-columns: 31px 75px 1fr; }
.four { grid-template-columns: 31px 76px 36px 1fr; }
.row b { text-align: right; letter-spacing: .1px; }
.lb { font-size: 16px; color: #bcbcbc; font-weight: normal; }
.lb2 { margin-left: 5px; }
.lb-wide { overflow: visible; }
.yi { font-size: 15px; font-weight: normal; }
.dash { padding-right: 12px; }
.grn { color: #28c828; }
.red { color: #e8404c; }
.yel { color: #c0c030; }
.wht { color: #fff; }
.gry { color: #c0c0c0; }
.ticks { flex: 1; padding: 1px 2px 0; }
.tick-row { display: grid; grid-template-columns: 36px 88px 72px 1fr; height: 18px; line-height: 18px; font-size: 14px; }
.tick-row b { text-align: right; }
.tick-row b:first-child { text-align: left; }
.tick-row b:last-child { padding-right: 2px; }
.q-tabs { display: flex; height: 19px; border-top: 1px solid #a01818; color: #c0c0c0; font-size: 14px; line-height: 17px; }
.q-tabs span { flex: 1; text-align: center; border-right: 1px solid #a01818; }
.q-tabs span:last-child { border-right: 0; }
.q-tabs .cyan { color: #38d8d8; }

/* toolbar */
.toolbar { flex: 1; display: flex; flex-direction: column; padding-top: 22.500px; background: #f0f2f6; color: #1f4f90; overflow: hidden; }
.tool { flex: none; height: 23px; display: flex; align-items: center; justify-content: center; }
.ico { width: 16px; height: 16px; display: block; overflow: visible; }
.ico.box { background: #fff; border: 1px solid #7f9cc8; }
.ico.tinted { background: #cfe0ee; }
.tbox { display: flex; align-items: center; justify-content: center; width: 16px; height: 16px; background: #fff; border: 1px solid #7f9cc8; color: #2a5ca8; font-size: 11px; }
.tbox.fx { font-family: "Liberation Serif", serif; font-style: italic; font-size: 13px; border-radius: 8px; }
.tsep { flex: none; display: block; height: 1px; background: #b0b0b0; margin: 0 2px; }
.tsep.a { margin-top: 4px; margin-bottom: 4px; }
.tsep.b { margin-top: 2.500px; margin-bottom: 5px; }
.rsi { font-weight: bold; color: #3048b8; font-size: 12px; }
.dollar { font-weight: bold; color: #a82828; font-size: 18px; font-family: "Liberation Serif", serif; }
.num { font-size: 13px; color: #2a4f80; }
.per { height: 22px; font-size: 14px; color: #2a4f80; }
.per.first { border-top: 1px solid #a8b0bc; }
.per.on { background: #fff; }
.arrow { fill: #f2f8ff; stroke: #4d86c8; stroke-width: 1.200; }
.i-red { fill: none; stroke: #d83030; stroke-width: 1.200; }
.i-grn { fill: none; stroke: #2c9c3c; stroke-width: 1.200; }
.i-blu { fill: none; stroke: #2850c0; stroke-width: 1.200; }
.i-ring { fill: #eee; stroke: #777; stroke-width: 1; }
.i-chk { fill: none; stroke: #555; stroke-width: 1; }
.dash3 { stroke-dasharray: 2 1; }
.i-faint { fill: none; stroke: #9a9a9a; stroke-width: 1; }
.i-thick-r { fill: none; stroke: #d82020; stroke-width: 3; }
.i-thick-g { fill: none; stroke: #20a030; stroke-width: 3; }
.i-sheet { fill: #f4f8ff; stroke: #6d88b0; stroke-width: 1; }
.i-dark { fill: none; stroke: #555; stroke-width: 1; }
.i-yel { fill: #e8c84c; stroke: #a88a20; stroke-width: .6; }
.i-org { fill: #f0a060; stroke: #c87028; stroke-width: 1; }
.i-wl { fill: none; stroke: #fff; stroke-width: 1; }
.i-move { fill: #1848b8; }
.i-pencil { fill: #f0b040; stroke: #a87020; stroke-width: .7; }
.i-tip { fill: #e8d8b8; }
.i-refresh { fill: none; stroke: #38a048; stroke-width: 2; }
.i-refresh-h { fill: none; stroke: #38a048; stroke-width: 1; }

/* status bar */
.status { display: flex; align-items: center; height: 21px; padding-left: 10px; background: #f4f4f4; border-top: 1px solid #c02020; color: #222; white-space: nowrap; font-size: 12px; }
.s-item { display: inline-flex; align-items: center; }
.s-g { font-size: 13px; color: #0a7a2c; }
.gap12 { margin-left: 12px; }
.gap13 { margin-left: 13px; }
.gap8 { margin-left: 8px; }
.s-amt { margin-left: 7px; }
.s-amt + .s-item { margin-left: 7px; }
.meter { margin-left: 8px; }
.m-bg { fill: #e4e4e4; }
.m-g { fill: none; stroke: #16a020; stroke-width: 2; stroke-dasharray: 6 2; }
.m-r { fill: none; stroke: #c01010; stroke-width: 2; }
.m-gv { fill: none; stroke: #16a020; stroke-width: 2; }
.s-site { margin-left: 5px; }
.s-icons { display: flex; align-items: center; gap: 6px; margin-left: auto; padding-right: 8px; }
.s-ico { width: 14px; height: 14px; display: block; }
.s-ico.narrow { width: 6px; }
.si-doc { fill: #f8f8f8; stroke: #999; stroke-width: 1; }
.si-coin { fill: #e8d848; stroke: #a89820; stroke-width: 1; }
.si-up { fill: none; stroke: #665800; stroke-width: 1.500; }
.si-ant { fill: none; stroke: #777; stroke-width: 1; }
.si-tree { fill: #6e7e76; }

/* watermark logo */
.logo {
  position: absolute; left: 937px; top: 3px; width: 200px; height: 54px;
  display: flex; align-items: center; padding-left: 3px;
  background: rgba(20, 20, 20, .88);
}
.flower { flex: none; opacity: .82; }
.pt-blue { fill: #4aa4e8; stroke: #d8eeff; stroke-width: 1.500; }
.pt-org { fill: #e8a020; stroke: #ffeec0; stroke-width: 1.500; }
.pt-pur { fill: #a080e0; stroke: #eee0ff; stroke-width: 1.500; }
.pt-red { fill: #d83838; stroke: #ffd8d8; stroke-width: 1.500; }
.pt-grn { fill: #9ccfa0; stroke: #f0fff0; stroke-width: 1.500; }
.pt-mid { fill: #403020; stroke: #fff; stroke-width: 1; }
.logo-text { display: flex; flex-direction: column; margin-left: 7px; }
.logo-cn { font-family: "Noto Sans CJK SC", sans-serif; font-weight: bold; font-style: italic; font-size: 22px; line-height: 28px; color: #cf8f30; white-space: nowrap; text-shadow: 1px 1px 0 #5a3810; }
.logo-en { margin-left: 11px; font-family: "Liberation Sans", sans-serif; font-weight: bold; font-style: italic; font-size: 17px; line-height: 20px; color: #f0e0a4; white-space: nowrap; }
```
